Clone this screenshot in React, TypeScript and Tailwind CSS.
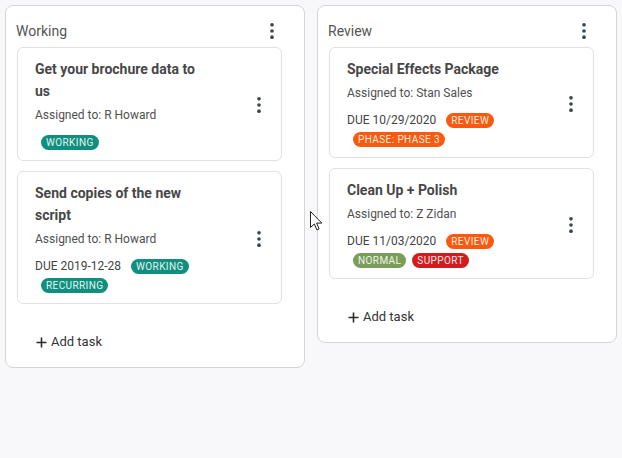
import React from 'react'

type Badge = { label: string; tone: 'teal' | 'orange' | 'green' | 'red' }
type Task = { id: string; title: string; assignee: string; due?: string; badges: Badge[] }
type Column = { id: string; name: string; tasks: Task[] }

const TONES: Record<Badge['tone'], string> = {
  teal: 'bg-[#108f7f] text-[#e3f4f1]',
  orange: 'bg-[#f95a12] text-[#ffe9dc]',
  green: 'bg-[#7a9d5a] text-[#eef4e6]',
  red: 'bg-[#d11b1d] text-[#fde4e4]',
}

const COLUMNS: Column[] = [
  {
    id: 'working',
    name: 'Working',
    tasks: [
      {
        id: 't1',
        title: 'Get your brochure data to us',
        assignee: 'R Howard',
        badges: [{ label: 'Working', tone: 'teal' }],
      },
      {
        id: 't2',
        title: 'Send copies of the new script',
        assignee: 'R Howard',
        due: '2019-12-28',
        badges: [
          { label: 'Working', tone: 'teal' },
          { label: 'Recurring', tone: 'teal' },
        ],
      },
    ],
  },
  {
    id: 'review',
    name: 'Review',
    tasks: [
      {
        id: 't3',
        title: 'Special Effects Package',
        assignee: 'Stan Sales',
        due: '10/29/2020',
        badges: [
          { label: 'Review', tone: 'orange' },
          { label: 'Phase: Phase 3', tone: 'orange' },
        ],
      },
      {
        id: 't4',
        title: 'Clean Up + Polish',
        assignee: 'Z Zidan',
        due: '11/03/2020',
        badges: [
          { label: 'Review', tone: 'orange' },
          { label: 'Normal', tone: 'green' },
          { label: 'Support', tone: 'red' },
        ],
      },
    ],
  },
]

function Kebab() {
  return (
    <svg width="20" height="20" viewBox="0 0 24 24" className="shrink-0 text-[#3b4650]" fill="currentColor">
      <circle cx="12" cy="4.6" r="2.2" />
      <circle cx="12" cy="12" r="2.2" />
      <circle cx="12" cy="19.4" r="2.2" />
    </svg>
  )
}

function TaskCard({ task }: { task: Task }) {
  return (
    <div className="flex items-center justify-between bg-white border border-[#e2e2e2] rounded-[6px] pl-[17px] pr-[12px] pt-[10px] pb-[8px]">
      <div className="w-[170px]">
        <p className="text-[14px] leading-[22px] font-bold text-[#474747]">{task.title}</p>
        <p className="mt-[4px] text-[12px] leading-[18px] text-[#505050]">Assigned to: {task.assignee}</p>
        <div className="mt-[9px] flex flex-wrap items-center">
          {task.due && (
            <span className="h-[19px] leading-[19px] text-[12px] text-[#444] mr-[4px]">DUE {task.due}</span>
          )}
          {task.badges.map((b, i) => (
            <span key={i} className="h-[19px] flex items-center ml-[6px]">
              <span
                className={`h-[15px] px-[5px] rounded-full text-[10px] leading-[15px] font-normal uppercase tracking-[0.4px] ${TONES[b.tone]}`}
              >
                {b.label}
              </span>
            </span>
          ))}
        </div>
      </div>
      <Kebab />
    </div>
  )
}

export default function App() {
  return (
    <div className="relative w-[622px] h-[458px] bg-[#f8f8fb] pt-[5px] pl-[5px] font-['Roboto',sans-serif]">
      <div className="flex items-start gap-[12px]">
        {COLUMNS.map(col => (
          <div key={col.id} className="w-[300px] bg-white border border-[#d5d5d5] rounded-[8px] pl-[11px] pr-[22px] pt-[9px] pb-[15px]">
            <div className="h-[32px] flex items-center justify-between">
              <span className="text-[14px] text-[#555] -ml-[1px]">{col.name}</span>
              <Kebab />
            </div>
            <div className="flex flex-col gap-[10px]">
              {col.tasks.map(t => (
                <TaskCard key={t.id} task={t} />
              ))}
            </div>
            <div className="mt-[28px] h-[20px] flex items-center pl-[19px] text-[13px] text-[#333]">
              <svg width="11" height="11" viewBox="0 0 11 11" className="mr-[4px]" stroke="#2b2b2b" strokeWidth="1.6">
                <path d="M5.5 0.5v10M0.5 5.5h10" />
              </svg>
              Add task
            </div>
          </div>
        ))}
      </div>
      <svg className="absolute left-[310px] top-[211px]" width="12" height="20" viewBox="0 0 12 20">
        <path d="M0.5 0.5v16l3.8-3.6 2.6 6 2.2-1-2.5-5.8h5.2z" fill="#fff" stroke="#222" strokeWidth="1" strokeLinejoin="round" />
      </svg>
    </div>
  )
}
